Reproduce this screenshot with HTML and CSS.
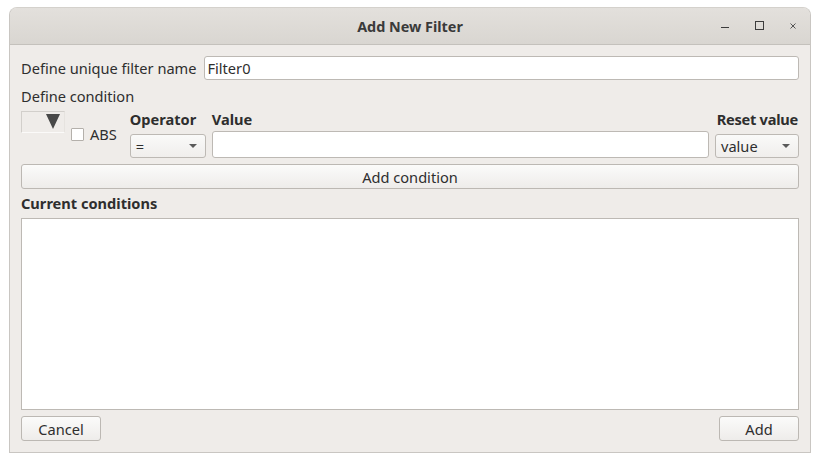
FILE: index.html
```html
<!DOCTYPE html>
<html>
<head>
<meta charset="utf-8">
<link rel="stylesheet" href="styles.css">
</head>
<body>
<div class="window">
  <div class="titlebar">
    <div class="title">Add New Filter</div>
    <div class="controls">
      <span class="ctl"><svg width="12" height="12" viewBox="0 0 12 12"><path d="M2 8.5h8" stroke="#3c3c3c" stroke-width="1"/></svg></span>
      <span class="ctl"><svg width="12" height="12" viewBox="0 0 12 12"><rect x="2.5" y="2.5" width="8" height="8" fill="none" stroke="#3c3c3c" stroke-width="1"/></svg></span>
      <span class="ctl"><svg width="12" height="12" viewBox="0 0 12 12"><path d="M3.5 4.5l5 5M8.5 4.5l-5 5" stroke="#555" stroke-width="1"/></svg></span>
    </div>
  </div>
  <div class="content">
    <div class="row name-row">
      <span class="label">Define unique filter name</span>
      <div class="input">Filter0</div>
    </div>
    <div class="label section">Define condition</div>
    <div class="cond">
      <div class="field-combo"><span class="big-tri"></span></div>
      <div class="abs"><span class="checkbox"></span><span>ABS</span></div>
      <div class="col op">
        <div class="hdr">Operator</div>
        <div class="combo"><span>=</span><span class="tri"></span></div>
      </div>
      <div class="col val">
        <div class="hdr">Value</div>
        <div class="input"></div>
      </div>
      <div class="col reset">
        <div class="hdr right">Reset value</div>
        <div class="combo"><span>value</span><span class="tri"></span></div>
      </div>
    </div>
    <div class="button wide">Add condition</div>
    <div class="hdr cur">Current conditions</div>
    <div class="list"></div>
    <div class="footer">
      <div class="button small">Cancel</div>
      <div class="button small">Add</div>
    </div>
  </div>
</div>
</body>
</html>
```
FILE: styles.css
```css
html, body {
  margin: 0;
  padding: 0;
  background: #ffffff;
}
body {
  font-family: "Noto Sans", "Open Sans", sans-serif;
  font-size: 14.6px;
  color: #2e2e2e;
}
.window {
  margin: 7px 0 0 9px;
  width: 800px;
  height: 444px;
  border: 1px solid #c9c6c2;
  border-top-color: #d4d1cc;
  border-radius: 8px 8px 0 0;
  background: #efece9;
  display: flex;
  flex-direction: column;
  overflow: hidden;
}
.titlebar {
  height: 36px;
  flex: none;
  background: linear-gradient(#e3e0dc, #d9d6d1);
  border-bottom: 1px solid #c4c1bc;
  display: flex;
  align-items: center;
  justify-content: center;
  position: relative;
}
.title {
  font-weight: bold;
  font-size: 14.4px;
  color: #3a3a3a;
}
.controls {
  position: absolute;
  right: 11px;
  top: 11px;
  display: flex;
  gap: 22px;
}
.ctl {
  display: block;
  width: 12px;
  height: 12px;
}
.ctl svg { display: block; }
.content {
  flex: 1;
  padding: 11px 11px 10px 11px;
  display: flex;
  flex-direction: column;
}
.row {
  display: flex;
  align-items: center;
}
.name-row {
  gap: 7px;
  height: 24px;
}
.label {
  white-space: nowrap;
}
.input {
  flex: 1;
  height: 24px;
  box-sizing: border-box;
  background: #fff;
  border: 1px solid #bdb9b4;
  border-radius: 3px;
  padding: 0 3px;
  display: flex;
  align-items: center;
}
.section {
  margin-top: 6px;
  height: 20px;
  line-height: 20px;
}
.cond {
  margin-top: 5px;
  display: flex;
  align-items: stretch;
  height: 47px;
}
.field-combo {
  width: 44px;
  height: 22px;
  box-sizing: border-box;
  border: 1px solid #d2cfcb;
  border-right-color: #e6e3df;
  border-bottom-color: #fbfaf9;
  position: relative;
  flex: none;
}
.big-tri {
  position: absolute;
  left: 24px;
  top: 2px;
  width: 0;
  height: 0;
  border-left: 7px solid transparent;
  border-right: 7px solid transparent;
  border-top: 15px solid #484848;
}
.abs {
  display: flex;
  align-items: center;
  gap: 6px;
  margin-left: 6px;
  margin-right: 13px;
  margin-top: -1px;
  flex: none;
}
.checkbox {
  width: 13px;
  height: 13px;
  box-sizing: border-box;
  border: 1px solid #b4b0ab;
  background: #fff;
  border-radius: 1px;
}
.col {
  display: flex;
  flex-direction: column;
  justify-content: space-between;
}
.col .hdr {
  line-height: 16px;
}
.op { width: 76px; }
.val { flex: 1; margin: 0 6px; }
.reset { width: 84px; }
.hdr {
  font-weight: bold;
  white-space: nowrap;
  height: 20px;
  line-height: 20px;
}
.right { direction: rtl; text-align: right; margin-right: 1px; letter-spacing: -0.25px; }
.combo {
  height: 24px;
  box-sizing: border-box;
  border: 1px solid #bdb9b4;
  border-radius: 3px;
  background: linear-gradient(#fafaf9, #f0eeec);
  display: flex;
  align-items: center;
  justify-content: space-between;
  padding: 0 8px 0 5px;
}
.tri {
  width: 0;
  height: 0;
  border-left: 4px solid transparent;
  border-right: 4px solid transparent;
  border-top: 4px solid #5a5a5a;
}
.button {
  height: 25px;
  box-sizing: border-box;
  border: 1px solid #bcb8b3;
  border-radius: 3px;
  background: linear-gradient(#fbfbfa, #eeecea);
  display: flex;
  align-items: center;
  justify-content: center;
}
.wide { margin-top: 6px; }
.cur { margin-top: 4px; }
.list {
  margin-top: 5px;
  height: 192px;
  flex: none;
  box-sizing: border-box;
  background: #fff;
  border: 1px solid #bdb9b4;
}
.footer {
  margin-top: 6px;
  display: flex;
  justify-content: space-between;
}
.small { width: 80px; }
```
